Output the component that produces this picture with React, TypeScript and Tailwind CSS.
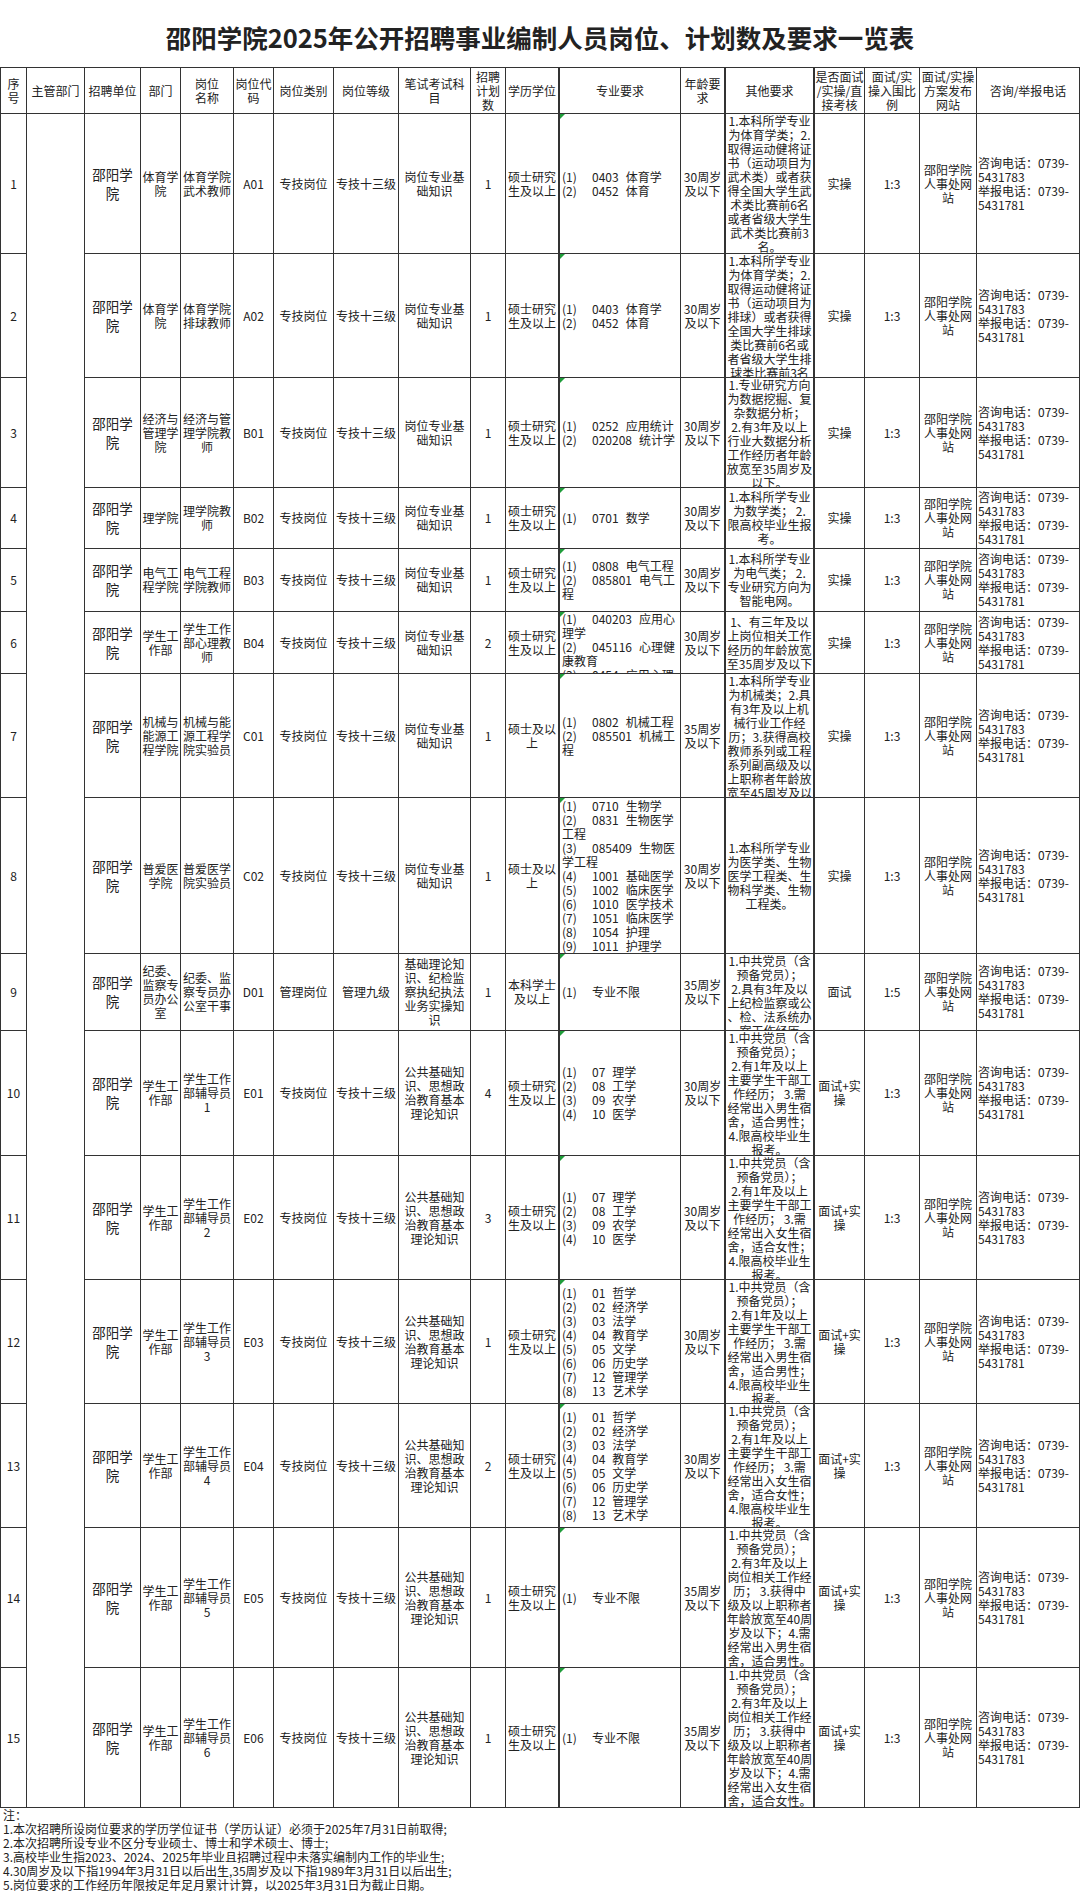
import React from "react";

type Row = {
  no: string;
  dept: string[];
  name: string[];
  code: string;
  type: string;
  level: string;
  exam: string[];
  count: string;
  edu: string[];
  major: string[];
  age: string[];
  other: string[];
  mode: string[];
  ratio: string;
  p2: string;
};

const EXAM1 = ["岗位专业基", "础知识"];
const EXAM2 = ["公共基础知", "识、思想政", "治教育基本", "理论知识"];
const EDU1 = ["硕士研究", "生及以上"];
const EDU2 = ["硕士及以", "上"];
const AGE30 = ["30周岁", "及以下"];
const AGE35 = ["35周岁", "及以下"];
const MAJ_07 = ["(1)|07 理学", "(2)|08 工学", "(3)|09 农学", "(4)|10 医学"];
const MAJ_01 = [
  "(1)|01 哲学",
  "(2)|02 经济学",
  "(3)|03 法学",
  "(4)|04 教育学",
  "(5)|05 文学",
  "(6)|06 历史学",
  "(7)|12 管理学",
  "(8)|13 艺术学",
];
const oStudent = (g: string) => [
  "1.中共党员（含",
  "预备党员）；",
  "2.有1年及以上",
  "主要学生干部工",
  "作经历； 3.需",
  `经常出入${g}生宿`,
  `舍，适合${g}性；`,
  "4.限高校毕业生",
  "报考。",
];
const oStudent3 = (g: string) => [
  "1.中共党员（含",
  "预备党员）；",
  "2.有3年及以上",
  "岗位相关工作经",
  "历； 3.获得中",
  "级及以上职称者",
  "年龄放宽至40周",
  "岁及以下；4.需",
  `经常出入${g}生宿`,
  `舍，适合${g}性。`,
];

const rows: Row[] = [
  {
    no: "1",
    dept: ["体育学", "院"],
    name: ["体育学院", "武术教师"],
    code: "A01",
    type: "专技岗位",
    level: "专技十三级",
    exam: EXAM1,
    count: "1",
    edu: EDU1,
    major: ["(1)|0403 体育学", "(2)|0452 体育"],
    age: AGE30,
    other: [
      "1.本科所学专业",
      "为体育学类；2.",
      "取得运动健将证",
      "书（运动项目为",
      "武术类）或者获",
      "得全国大学生武",
      "术类比赛前6名",
      "或者省级大学生",
      "武术类比赛前3",
      "名。",
    ],
    mode: ["实操"],
    ratio: "1:3",
    p2: "5431781",
  },
  {
    no: "2",
    dept: ["体育学", "院"],
    name: ["体育学院", "排球教师"],
    code: "A02",
    type: "专技岗位",
    level: "专技十三级",
    exam: EXAM1,
    count: "1",
    edu: EDU1,
    major: ["(1)|0403 体育学", "(2)|0452 体育"],
    age: AGE30,
    other: [
      "1.本科所学专业",
      "为体育学类；2.",
      "取得运动健将证",
      "书（运动项目为",
      "排球）或者获得",
      "全国大学生排球",
      "类比赛前6名或",
      "者省级大学生排",
      "球类比赛前3名",
      "。",
    ],
    mode: ["实操"],
    ratio: "1:3",
    p2: "5431781",
  },
  {
    no: "3",
    dept: ["经济与", "管理学", "院"],
    name: ["经济与管", "理学院教", "师"],
    code: "B01",
    type: "专技岗位",
    level: "专技十三级",
    exam: EXAM1,
    count: "1",
    edu: EDU1,
    major: ["(1)|0252 应用统计", "(2)|020208 统计学"],
    age: AGE30,
    other: [
      "1.专业研究方向",
      "为数据挖掘、复",
      "杂数据分析；",
      "2.有3年及以上",
      "行业大数据分析",
      "工作经历者年龄",
      "放宽至35周岁及",
      "以下。",
    ],
    mode: ["实操"],
    ratio: "1:3",
    p2: "5431781",
  },
  {
    no: "4",
    dept: ["理学院"],
    name: ["理学院教", "师"],
    code: "B02",
    type: "专技岗位",
    level: "专技十三级",
    exam: EXAM1,
    count: "1",
    edu: EDU1,
    major: ["(1)|0701 数学"],
    age: AGE30,
    other: ["1.本科所学专业", "为数学类； 2.", "限高校毕业生报", "考。"],
    mode: ["实操"],
    ratio: "1:3",
    p2: "5431781",
  },
  {
    no: "5",
    dept: ["电气工", "程学院"],
    name: ["电气工程", "学院教师"],
    code: "B03",
    type: "专技岗位",
    level: "专技十三级",
    exam: EXAM1,
    count: "1",
    edu: EDU1,
    major: ["(1)|0808 电气工程", "(2)|085801 电气工", "程"],
    age: AGE30,
    other: ["1.本科所学专业", "为电气类； 2.", "专业研究方向为", "智能电网。"],
    mode: ["实操"],
    ratio: "1:3",
    p2: "5431781",
  },
  {
    no: "6",
    dept: ["学生工", "作部"],
    name: ["学生工作", "部心理教", "师"],
    code: "B04",
    type: "专技岗位",
    level: "专技十三级",
    exam: EXAM1,
    count: "2",
    edu: EDU1,
    major: [
      "(1)|040203 应用心",
      "理学",
      "(2)|045116 心理健",
      "康教育",
      "(3)|0454 应用心理",
    ],
    age: AGE30,
    other: ["1、有三年及以", "上岗位相关工作", "经历的年龄放宽", "至35周岁及以下"],
    mode: ["实操"],
    ratio: "1:3",
    p2: "5431781",
  },
  {
    no: "7",
    dept: ["机械与", "能源工", "程学院"],
    name: ["机械与能", "源工程学", "院实验员"],
    code: "C01",
    type: "专技岗位",
    level: "专技十三级",
    exam: EXAM1,
    count: "1",
    edu: EDU2,
    major: ["(1)|0802 机械工程", "(2)|085501 机械工", "程"],
    age: AGE35,
    other: [
      "1.本科所学专业",
      "为机械类；2.具",
      "有3年及以上机",
      "械行业工作经",
      "历；3.获得高校",
      "教师系列或工程",
      "系列副高级及以",
      "上职称者年龄放",
      "宽至45周岁及以",
      "下。",
    ],
    mode: ["实操"],
    ratio: "1:3",
    p2: "5431781",
  },
  {
    no: "8",
    dept: ["普爱医", "学院"],
    name: ["普爱医学", "院实验员"],
    code: "C02",
    type: "专技岗位",
    level: "专技十三级",
    exam: EXAM1,
    count: "1",
    edu: EDU2,
    major: [
      "(1)|0710 生物学",
      "(2)|0831 生物医学",
      "工程",
      "(3)|085409 生物医",
      "学工程",
      "(4)|1001 基础医学",
      "(5)|1002 临床医学",
      "(6)|1010 医学技术",
      "(7)|1051 临床医学",
      "(8)|1054 护理",
      "(9)|1011 护理学",
    ],
    age: AGE30,
    other: ["1.本科所学专业", "为医学类、生物", "医学工程类、生", "物科学类、生物", "工程类。"],
    mode: ["实操"],
    ratio: "1:3",
    p2: "5431781",
  },
  {
    no: "9",
    dept: ["纪委、", "监察专", "员办公", "室"],
    name: ["纪委、监", "察专员办", "公室干事"],
    code: "D01",
    type: "管理岗位",
    level: "管理九级",
    exam: ["基础理论知", "识、纪检监", "察执纪执法", "业务实操知", "识"],
    count: "1",
    edu: ["本科学士", "及以上"],
    major: ["(1)|专业不限"],
    age: AGE35,
    other: [
      "1.中共党员（含",
      "预备党员）；",
      "2.具有3年及以",
      "上纪检监察或公",
      "、检、法系统办",
      "案工作经历",
    ],
    mode: ["面试"],
    ratio: "1:5",
    p2: "5431781",
  },
  {
    no: "10",
    dept: ["学生工", "作部"],
    name: ["学生工作", "部辅导员", "1"],
    code: "E01",
    type: "专技岗位",
    level: "专技十三级",
    exam: EXAM2,
    count: "4",
    edu: EDU1,
    major: MAJ_07,
    age: AGE30,
    other: oStudent("男"),
    mode: ["面试+实", "操"],
    ratio: "1:3",
    p2: "5431781",
  },
  {
    no: "11",
    dept: ["学生工", "作部"],
    name: ["学生工作", "部辅导员", "2"],
    code: "E02",
    type: "专技岗位",
    level: "专技十三级",
    exam: EXAM2,
    count: "3",
    edu: EDU1,
    major: MAJ_07,
    age: AGE30,
    other: oStudent("女"),
    mode: ["面试+实", "操"],
    ratio: "1:3",
    p2: "5431783",
  },
  {
    no: "12",
    dept: ["学生工", "作部"],
    name: ["学生工作", "部辅导员", "3"],
    code: "E03",
    type: "专技岗位",
    level: "专技十三级",
    exam: EXAM2,
    count: "1",
    edu: EDU1,
    major: MAJ_01,
    age: AGE30,
    other: oStudent("男"),
    mode: ["面试+实", "操"],
    ratio: "1:3",
    p2: "5431781",
  },
  {
    no: "13",
    dept: ["学生工", "作部"],
    name: ["学生工作", "部辅导员", "4"],
    code: "E04",
    type: "专技岗位",
    level: "专技十三级",
    exam: EXAM2,
    count: "2",
    edu: EDU1,
    major: MAJ_01,
    age: AGE30,
    other: oStudent("女"),
    mode: ["面试+实", "操"],
    ratio: "1:3",
    p2: "5431781",
  },
  {
    no: "14",
    dept: ["学生工", "作部"],
    name: ["学生工作", "部辅导员", "5"],
    code: "E05",
    type: "专技岗位",
    level: "专技十三级",
    exam: EXAM2,
    count: "1",
    edu: EDU1,
    major: ["(1)|专业不限"],
    age: AGE35,
    other: oStudent3("男"),
    mode: ["面试+实", "操"],
    ratio: "1:3",
    p2: "5431781",
  },
  {
    no: "15",
    dept: ["学生工", "作部"],
    name: ["学生工作", "部辅导员", "6"],
    code: "E06",
    type: "专技岗位",
    level: "专技十三级",
    exam: EXAM2,
    count: "1",
    edu: EDU1,
    major: ["(1)|专业不限"],
    age: AGE35,
    other: oStudent3("女"),
    mode: ["面试+实", "操"],
    ratio: "1:3",
    p2: "5431781",
  },
];

const headers: { lines: string[]; extra?: string }[] = [
  { lines: ["序", "号"] },
  { lines: ["主管部门"] },
  { lines: ["招聘单位"] },
  { lines: ["部门"] },
  { lines: ["岗位", "名称"] },
  { lines: ["岗位代", "码"] },
  { lines: ["岗位类别"] },
  { lines: ["岗位等级"] },
  { lines: ["笔试考试科", "目"] },
  { lines: ["招聘", "计划", "数"] },
  { lines: ["学历学位"], extra: "border-r-2" },
  { lines: ["专业要求"] },
  { lines: ["年龄要", "求"], extra: "border-r-2" },
  { lines: ["其他要求"], extra: "border-r-2" },
  { lines: ["是否面试", "/实操/直", "接考核"] },
  { lines: ["面试/实", "操入围比", "例"] },
  { lines: ["面试/实操", "方案发布", "网站"] },
  { lines: ["咨询/举报电话"] },
];

function Cell({
  lines,
  left = false,
  className = "",
}: {
  lines: string[];
  left?: boolean;
  className?: string;
}) {
  return (
    <div
      className={`relative flex flex-col overflow-hidden border-r border-b border-[#333333] ${
        left ? "text-left" : "text-center"
      } ${className}`}
    >
      <div className="my-auto">
        {lines.map((l, i) => (
          <div key={i} className="whitespace-nowrap">
            {l}
          </div>
        ))}
      </div>
    </div>
  );
}

function MajorLine({ text }: { text: string }) {
  const parts = text.split("|");
  if (parts.length < 2) return <div className="whitespace-nowrap">{text}</div>;
  const rest = parts[1];
  const sp = rest.indexOf(" ");
  return (
    <div className="whitespace-nowrap">
      <span className="inline-block w-[30px]">{parts[0]}</span>
      {sp > 0 ? (
        <>
          {rest.slice(0, sp)}
          <span className="ml-[7px]">{rest.slice(sp + 1)}</span>
        </>
      ) : (
        rest
      )}
    </div>
  );
}

function Major({ lines }: { lines: string[] }) {
  return (
    <div className="relative flex flex-col overflow-hidden border-r border-b border-[#333333] pl-[2px] text-left">
      <span className="absolute left-0 top-0 h-0 w-0 border-t-[5px] border-r-[5px] border-t-[#1f9d3a] border-r-transparent" />
      <div className="my-auto">
        {lines.map((l, i) => (
          <MajorLine key={i} text={l} />
        ))}
      </div>
    </div>
  );
}

export default function App() {
  return (
    <div className="min-h-[1901px] w-[1080px] bg-white font-['Noto_Sans_CJK_SC',sans-serif] text-[12px] leading-[14px] text-[#222222]">
      <div className="flex h-[67px] items-center justify-center pt-[6px]">
        <h1 className="text-[25.5px] font-bold leading-[30px] text-[#222222]">
          邵阳学院2025年公开招聘事业编制人员岗位、计划数及要求一览表
        </h1>
      </div>
      <div className="grid grid-cols-[26px_58px_56px_40px_53px_40px_60px_65px_72px_35px_54px_121px_45px_89px_50px_55px_57px_103px] grid-rows-[46px_140px_124px_110px_61px_63px_62px_124px_156px_77px_125px_124px_124px_124px_140px_140px] border-l border-t border-[#333333]">
        {headers.map((h, i) => (
          <Cell key={`h${i}`} lines={h.lines} className={h.extra ?? ""} />
        ))}
        <div className="col-start-2 row-start-2 row-end-17 border-r border-b border-[#333333]" />
        {rows.map((r) => (
          <React.Fragment key={r.no}>
            <Cell lines={[r.no]} className="col-start-1" />
            <Cell lines={["邵阳学", "院"]} className="text-[13.5px] leading-[19px]" />
            <Cell lines={r.dept} />
            <Cell lines={r.name} />
            <Cell lines={[r.code]} />
            <Cell lines={[r.type]} />
            <Cell lines={[r.level]} />
            <Cell lines={r.exam} />
            <Cell lines={[r.count]} />
            <Cell lines={r.edu} className="border-r-2" />
            <Major lines={r.major} />
            <Cell lines={r.age} className="border-r-2" />
            <Cell lines={r.other} className="border-r-2" />
            <Cell lines={r.mode} />
            <Cell lines={[r.ratio]} />
            <Cell lines={["邵阳学院", "人事处网", "站"]} />
            <Cell
              left
              className="pl-[1px]"
              lines={["咨询电话：0739-", "5431783", "举报电话：0739-", r.p2]}
            />
          </React.Fragment>
        ))}
      </div>
      <div className="pl-[3px]">
        <div>注：</div>
        <div>1.本次招聘所设岗位要求的学历学位证书（学历认证）必须于2025年7月31日前取得;</div>
        <div>2.本次招聘所设专业不区分专业硕士、博士和学术硕士、博士;</div>
        <div>3.高校毕业生指2023、2024、2025年毕业且招聘过程中未落实编制内工作的毕业生;</div>
        <div>4.30周岁及以下指1994年3月31日以后出生,35周岁及以下指1989年3月31日以后出生;</div>
        <div>5.岗位要求的工作经历年限按足年足月累计计算，以2025年3月31日为截止日期。</div>
      </div>
    </div>
  );
}
